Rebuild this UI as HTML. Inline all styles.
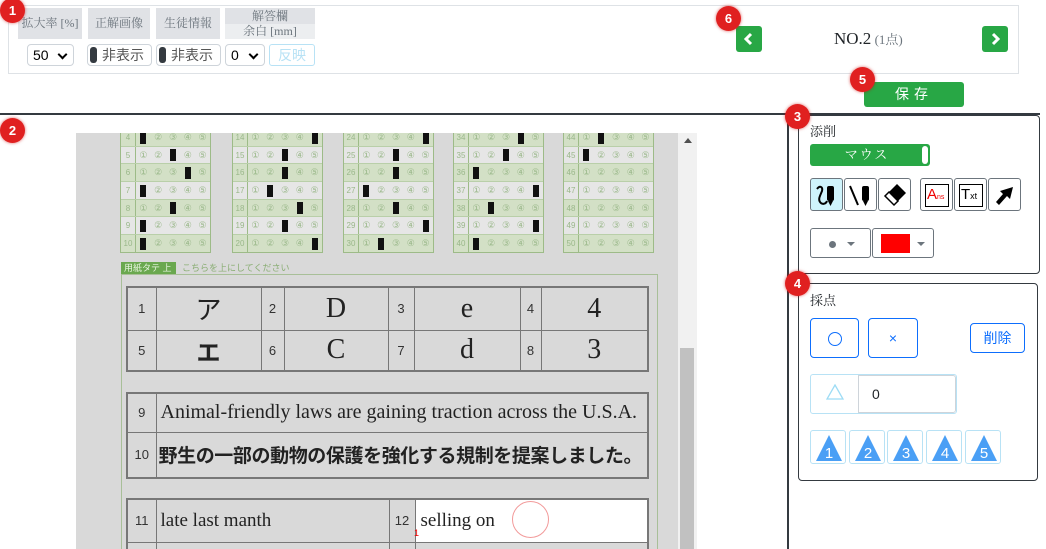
<!DOCTYPE html>
<html style="overflow:hidden"><head><meta charset="utf-8"><style>
*{box-sizing:border-box;margin:0;padding:0}
html,body{width:1046px;height:549px;overflow:hidden}
body{background:#fff;font-family:"Liberation Serif","Noto Serif CJK SC",serif;position:relative;color:#212529}
.a{position:absolute}
.lbl{position:absolute;background:#e0e2e6;color:#6c757d;font-size:12px;text-align:center;line-height:31px;top:8px;height:31px}
.sel{position:absolute;top:44px;height:22px;border:1px solid #ced4da;border-radius:4px;background:#fff;font-family:"Liberation Sans",sans-serif;font-size:14px;line-height:20px;padding-left:5px;color:#000}
.sel:after{content:"";position:absolute;right:7px;top:6px;width:5px;height:5px;border-right:2px solid #000;border-bottom:2px solid #000;transform:rotate(45deg)}
.tg{position:absolute;top:44px;height:22px;border:1px solid #ced4da;border-radius:4px;background:#fff;font-size:14px;line-height:20px;color:#555;font-family:"Liberation Sans","Noto Sans CJK JP",sans-serif}
.tg i{position:absolute;left:2px;top:2px;width:7px;height:16px;background:#343a40;border-radius:3px}
.badge{position:absolute;width:25px;height:25px;border-radius:50%;background:#e02020;box-shadow:0 0 3px rgba(200,0,0,.6);color:#fff;font-family:"Liberation Sans",sans-serif;font-size:13px;text-align:center;line-height:25px;font-weight:bold}
.gbtn{position:absolute;background:#28a745;border-radius:3px}
.panel{position:absolute;border:1px solid #343a40;border-radius:4px;background:#fff}
.ib{position:absolute;border:1px solid #6c757d;border-radius:3px;background:#fff;width:33px;height:33px}
.ob{position:absolute;border:1px solid #0d6efd;border-radius:4px;color:#0d6efd;text-align:center;font-family:"Liberation Sans","Noto Sans CJK JP",sans-serif}
.tb{position:absolute;border:1px solid #b8e2f5;border-radius:3px;width:36px;height:34px;top:430px}
.blk{position:absolute;top:-6px;width:91px;border:1px solid #9dbb88;background:#e6e6e6}
.r{height:17.7px;display:flex;font-family:"Liberation Sans",sans-serif;font-size:9px;color:#9ab88a;line-height:17px;border-top:1px solid #b9cfa9}
.r:nth-child(odd){background:#d3e0c6}
.r b{width:15px;border-right:1px solid #9dbb88;text-align:center;font-weight:normal;font-size:8px}
.r i{flex:1;text-align:center;font-style:normal}
.r i.m:before{content:"";display:inline-block;width:6px;height:12px;background:#111;vertical-align:middle}
table{position:absolute;border-collapse:collapse;border:2px solid #777}
td{border:1.5px solid #777;color:#222;font-family:"Liberation Serif","Noto Serif CJK JP",serif}
td.n{font-family:"Liberation Sans",sans-serif;font-size:13px;text-align:center;color:#333}
</style></head><body>
<div class="a" style="left:8px;top:5px;width:1011px;height:69px;border:1px solid #dee2e6"></div>
<div class="lbl" style="left:18px;width:64px">拡大率 [%]</div>
<div class="lbl" style="left:88px;width:62px">正解画像</div>
<div class="lbl" style="left:156px;width:64px">生徒情報</div>
<div class="lbl" style="left:225px;width:90px;height:16px;line-height:16px">解答欄</div>
<div class="lbl" style="left:225px;top:24px;width:90px;height:15px;line-height:15px;background:#eceef0">余白 [mm]</div>
<div class="sel" style="left:27px;width:47px">50</div>
<div class="tg" style="left:87px;width:65px"><i></i><span style="position:absolute;left:14px">非表示</span></div>
<div class="tg" style="left:156px;width:65px"><i></i><span style="position:absolute;left:14px">非表示</span></div>
<div class="sel" style="left:225px;width:40px">0</div>
<div class="a" style="left:269px;top:44px;width:46px;height:22px;border:1px solid #b8e2f5;border-radius:3px;color:#b8e2f5;font-size:14px;text-align:center;line-height:20px;font-family:'Liberation Sans','Noto Sans CJK JP',sans-serif">反映</div>
<div class="gbtn" style="left:736px;top:26px;width:26px;height:26px"><svg width="26" height="26"><path d="M15 8 L10 13 L15 18" stroke="#fff" stroke-width="3" fill="none"/></svg></div>
<div class="gbtn" style="left:982px;top:26px;width:26px;height:26px"><svg width="26" height="26"><path d="M11 8 L16 13 L11 18" stroke="#fff" stroke-width="3" fill="none"/></svg></div>
<div class="a" style="left:834px;top:29px;font-size:17px;line-height:20px">NO.2<span style="font-size:13px;color:#6c757d"> (1点)</span></div>
<div class="gbtn" style="left:864px;top:82px;width:100px;height:25px;color:#fff;text-align:center;font-size:14px;line-height:25px;letter-spacing:5px;font-family:'Liberation Sans','Noto Sans CJK JP',sans-serif">保存</div>
<div class="a" style="left:0;top:113px;width:1040px;height:2px;background:#343a40"></div>
<div class="a" style="left:787px;top:113px;width:2px;height:436px;background:#343a40"></div>
<div class="a" style="left:76px;top:133px;width:602px;height:416px;overflow:hidden;background:#d9d9d9">
 <div class="blk" style="left:44px">
  <div class="r"><b>4</b><i class="m"></i><i>②</i><i>③</i><i>④</i><i>⑤</i></div>
  <div class="r"><b>5</b><i>①</i><i>②</i><i class="m"></i><i>④</i><i>⑤</i></div>
  <div class="r"><b>6</b><i>①</i><i>②</i><i>③</i><i class="m"></i><i>⑤</i></div>
  <div class="r"><b>7</b><i class="m"></i><i>②</i><i>③</i><i>④</i><i>⑤</i></div>
  <div class="r"><b>8</b><i>①</i><i>②</i><i class="m"></i><i>④</i><i>⑤</i></div>
  <div class="r"><b>9</b><i class="m"></i><i>②</i><i>③</i><i>④</i><i>⑤</i></div>
  <div class="r"><b>10</b><i class="m"></i><i>②</i><i>③</i><i>④</i><i>⑤</i></div>
 </div>
 <div class="blk" style="left:156px">
  <div class="r"><b>14</b><i>①</i><i>②</i><i>③</i><i>④</i><i class="m"></i></div>
  <div class="r"><b>15</b><i>①</i><i>②</i><i class="m"></i><i>④</i><i>⑤</i></div>
  <div class="r"><b>16</b><i>①</i><i>②</i><i class="m"></i><i>④</i><i>⑤</i></div>
  <div class="r"><b>17</b><i>①</i><i class="m"></i><i>③</i><i>④</i><i>⑤</i></div>
  <div class="r"><b>18</b><i>①</i><i>②</i><i>③</i><i class="m"></i><i>⑤</i></div>
  <div class="r"><b>19</b><i>①</i><i>②</i><i class="m"></i><i>④</i><i>⑤</i></div>
  <div class="r"><b>20</b><i>①</i><i>②</i><i>③</i><i>④</i><i class="m"></i></div>
 </div>
 <div class="blk" style="left:267px">
  <div class="r"><b>24</b><i>①</i><i>②</i><i>③</i><i>④</i><i class="m"></i></div>
  <div class="r"><b>25</b><i>①</i><i>②</i><i class="m"></i><i>④</i><i>⑤</i></div>
  <div class="r"><b>26</b><i>①</i><i>②</i><i class="m"></i><i>④</i><i>⑤</i></div>
  <div class="r"><b>27</b><i class="m"></i><i>②</i><i>③</i><i>④</i><i>⑤</i></div>
  <div class="r"><b>28</b><i>①</i><i>②</i><i class="m"></i><i>④</i><i>⑤</i></div>
  <div class="r"><b>29</b><i>①</i><i>②</i><i>③</i><i>④</i><i class="m"></i></div>
  <div class="r"><b>30</b><i>①</i><i class="m"></i><i>③</i><i>④</i><i>⑤</i></div>
 </div>
 <div class="blk" style="left:377px">
  <div class="r"><b>34</b><i>①</i><i>②</i><i>③</i><i class="m"></i><i>⑤</i></div>
  <div class="r"><b>35</b><i>①</i><i>②</i><i class="m"></i><i>④</i><i>⑤</i></div>
  <div class="r"><b>36</b><i class="m"></i><i>②</i><i>③</i><i>④</i><i>⑤</i></div>
  <div class="r"><b>37</b><i>①</i><i>②</i><i>③</i><i>④</i><i class="m"></i></div>
  <div class="r"><b>38</b><i>①</i><i class="m"></i><i>③</i><i>④</i><i>⑤</i></div>
  <div class="r"><b>39</b><i>①</i><i>②</i><i>③</i><i>④</i><i class="m"></i></div>
  <div class="r"><b>40</b><i class="m"></i><i>②</i><i>③</i><i>④</i><i>⑤</i></div>
 </div>
 <div class="blk" style="left:487px">
  <div class="r"><b>44</b><i>①</i><i class="m"></i><i>③</i><i>④</i><i>⑤</i></div>
  <div class="r"><b>45</b><i class="m"></i><i>②</i><i>③</i><i>④</i><i>⑤</i></div>
  <div class="r"><b>46</b><i>①</i><i>②</i><i>③</i><i>④</i><i>⑤</i></div>
  <div class="r"><b>47</b><i>①</i><i>②</i><i>③</i><i>④</i><i>⑤</i></div>
  <div class="r"><b>48</b><i>①</i><i>②</i><i>③</i><i>④</i><i>⑤</i></div>
  <div class="r"><b>49</b><i>①</i><i>②</i><i>③</i><i>④</i><i>⑤</i></div>
  <div class="r"><b>50</b><i>①</i><i>②</i><i>③</i><i>④</i><i>⑤</i></div>
 </div>
 <div class="a" style="left:45px;top:129px;width:55px;height:12px;background:#6aa84f;color:#e8f5e0;font-size:9px;line-height:12px;padding-left:3px;font-family:'Liberation Sans','Noto Sans CJK JP',sans-serif">用紙タテ 上</div>
 <div class="a" style="left:106px;top:129px;color:#8aae74;font-size:9px;line-height:12px;font-family:'Liberation Sans','Noto Sans CJK JP',sans-serif">こちらを上にしてください</div>
 <div class="a" style="left:45px;top:141px;width:537px;height:300px;border:1px solid #a8bf98"></div>
 <table style="left:50px;top:153px;width:523px;height:86px">
  <tr><td class="n" style="width:29px">1</td><td style="width:105px;text-align:center;font-size:26px;font-family:'Liberation Sans','Noto Sans CJK JP',sans-serif">ア</td><td class="n" style="width:23px">2</td><td style="width:104px;text-align:center;font-size:28px">D</td><td class="n" style="width:26px">3</td><td style="width:106px;text-align:center;font-size:28px">e</td><td class="n" style="width:21px">4</td><td style="text-align:center;font-size:28px">4</td></tr>
  <tr><td class="n">5</td><td style="text-align:center;font-size:24px;font-weight:bold;font-family:'Liberation Sans','Noto Sans CJK JP',sans-serif">エ</td><td class="n">6</td><td style="text-align:center;font-size:28px">C</td><td class="n">7</td><td style="text-align:center;font-size:28px">d</td><td class="n">8</td><td style="text-align:center;font-size:28px">3</td></tr>
 </table>
 <table style="left:50px;top:259px;width:523px;height:87px">
  <tr><td class="n" style="width:29px">9</td><td style="font-size:20px;padding-left:4px;white-space:nowrap">Animal-friendly laws are gaining traction across the U.S.A.</td></tr>
  <tr><td class="n">10</td><td style="font-size:19px;padding-left:2px;white-space:nowrap;font-weight:bold;font-family:'Liberation Sans','Noto Sans CJK JP',sans-serif;letter-spacing:-0.4px">野生の一部の動物の保護を強化する規制を提案しました。</td></tr>
 </table>
 <table style="left:50px;top:365px;width:523px;height:90px">
  <tr style="height:43px"><td class="n" style="width:29px">11</td><td style="width:233px;font-size:19px;padding-left:4px">late last manth</td><td class="n" style="width:26px">12</td><td style="background:#fff;font-size:19px;padding-left:5px;position:relative">selling on</td></tr>
  <tr><td></td><td></td><td></td><td></td></tr>
 </table>
 <div class="a" style="left:436px;top:368px;width:37px;height:37px;border:1.5px solid #f29a9a;border-radius:50%"></div>
 <div class="a" style="left:338px;top:395px;color:#e00;font-size:9px;font-family:'Liberation Sans',sans-serif">1</div>
</div>
<div class="a" style="left:678px;top:133px;width:19px;height:416px;background:#f1f1f1"></div>
<div class="a" style="left:684px;top:138px;width:0;height:0;border-left:4px solid transparent;border-right:4px solid transparent;border-bottom:5px solid #505050"></div>
<div class="a" style="left:680px;top:348px;width:14px;height:201px;background:#c1c1c1"></div>
<div class="panel" style="left:798px;top:115px;width:242px;height:159px"></div>
<div class="a" style="left:810px;top:121px;font-size:13px">添削</div>
<div class="gbtn" style="left:810px;top:144px;width:120px;height:22px;color:#fff;font-size:13px;text-align:center;line-height:22px;padding-right:6px;letter-spacing:2px">マウス<span style="position:absolute;right:2px;top:2px;width:6px;height:18px;background:#fff;border-radius:3px"></span></div>
<div class="ib" style="left:810px;top:178px;background:#cff4fc"><svg width="31" height="31"><path d="M6 10 C9 6 12 8 11 12 C9 17 7 20 9 23 C11 26 15 25 16 22" stroke="#000" stroke-width="2" fill="none"/><rect x="16" y="7" width="7" height="15" rx="2"/><path d="M17 22 L19.5 27 L22 22Z"/></svg></div>
<div class="ib" style="left:844px;top:178px"><svg width="31" height="31"><path d="M5 7 L13 26" stroke="#000" stroke-width="2"/><rect x="17" y="7" width="7" height="15" rx="2"/><path d="M18 22 L20.5 27 L23 22Z"/></svg></div>
<div class="ib" style="left:878px;top:178px"><svg width="31" height="31"><path d="M18 5 L27 14 L15 26 L6 17Z"/><path d="M10 13 L19 22 L15 26 L6 17Z" fill="#fff" stroke="#000" stroke-width="1.5"/></svg></div>
<div class="ib" style="left:920px;top:178px"><div class="a" style="left:4px;top:5px;width:24px;height:23px;border:1.5px solid #000;color:#e00;font-family:'Liberation Sans',sans-serif;font-size:15px;line-height:20px;padding-left:1px">A<span style="font-size:7px">ns</span></div></div>
<div class="ib" style="left:954px;top:178px"><div class="a" style="left:4px;top:5px;width:24px;height:23px;border:1.5px solid #000;color:#000;font-family:'Liberation Sans',sans-serif;font-size:15px;line-height:20px;padding-left:1px">T<span style="font-size:9px">xt</span></div></div>
<div class="ib" style="left:988px;top:178px"><svg width="31" height="31"><path d="M7 23 L14 15 L11 12 L24 8 L21 20 L18 17 L10 26Z"/></svg></div>
<div class="a" style="left:810px;top:228px;width:61px;height:30px;border:1px solid #6c757d;border-radius:3px"><span class="a" style="left:18px;top:12px;width:7px;height:7px;border-radius:50%;background:#6c757d"></span><span class="a" style="left:36px;top:13px;border-left:4px solid transparent;border-right:4px solid transparent;border-top:4px solid #6c757d"></span></div>
<div class="a" style="left:872px;top:228px;width:62px;height:30px;border:1px solid #6c757d;border-radius:3px"><span class="a" style="left:8px;top:5px;width:29px;height:19px;background:#f00"></span><span class="a" style="left:44px;top:13px;border-left:4px solid transparent;border-right:4px solid transparent;border-top:4px solid #6c757d"></span></div>
<div class="panel" style="left:798px;top:283px;width:240px;height:198px"></div>
<div class="a" style="left:810px;top:290px;font-size:13px">採点</div>
<div class="ob" style="left:810px;top:318px;width:49px;height:40px"><span class="a" style="left:17px;top:13px;width:14px;height:14px;border:1.5px solid #0d6efd;border-radius:50%"></span></div>
<div class="ob" style="left:868px;top:318px;width:50px;height:40px;font-size:14px;line-height:38px">×</div>
<div class="ob" style="left:970px;top:323px;width:55px;height:30px;font-size:14px;line-height:28px">削除</div>
<div class="a" style="left:810px;top:374px;width:147px;height:40px;border:1px solid #b8e2f5;border-radius:3px"></div>
<div class="a" style="left:858px;top:375px;width:98px;height:38px;border:1px solid #ced4da;border-radius:0 3px 3px 0;font-family:'Liberation Sans',sans-serif;font-size:14px;line-height:36px;padding-left:13px">0</div>
<svg class="a" style="left:826px;top:384px" width="18" height="16"><path d="M9 1 L17 15 L1 15Z" fill="none" stroke="#9ddcf5" stroke-width="1.3"/></svg>
<div class="tb" style="left:810px"><svg width="36" height="34"><path d="M18 4 L31 30 L5 30Z" fill="#4a9ff5"/><text x="18" y="27" fill="#fff" font-family="Liberation Sans" font-size="15" text-anchor="middle">1</text></svg></div>
<div class="tb" style="left:849px"><svg width="36" height="34"><path d="M18 4 L31 30 L5 30Z" fill="#4a9ff5"/><text x="18" y="27" fill="#fff" font-family="Liberation Sans" font-size="15" text-anchor="middle">2</text></svg></div>
<div class="tb" style="left:887px"><svg width="36" height="34"><path d="M18 4 L31 30 L5 30Z" fill="#4a9ff5"/><text x="18" y="27" fill="#fff" font-family="Liberation Sans" font-size="15" text-anchor="middle">3</text></svg></div>
<div class="tb" style="left:926px"><svg width="36" height="34"><path d="M18 4 L31 30 L5 30Z" fill="#4a9ff5"/><text x="18" y="27" fill="#fff" font-family="Liberation Sans" font-size="15" text-anchor="middle">4</text></svg></div>
<div class="tb" style="left:965px"><svg width="36" height="34"><path d="M18 4 L31 30 L5 30Z" fill="#4a9ff5"/><text x="18" y="27" fill="#fff" font-family="Liberation Sans" font-size="15" text-anchor="middle">5</text></svg></div>
<div class="badge" style="left:0;top:-2px">1</div>
<div class="badge" style="left:0;top:118px">2</div>
<div class="badge" style="left:785px;top:104px">3</div>
<div class="badge" style="left:785px;top:271px">4</div>
<div class="badge" style="left:850px;top:67px">5</div>
<div class="badge" style="left:716px;top:6px">6</div>
</body></html>
